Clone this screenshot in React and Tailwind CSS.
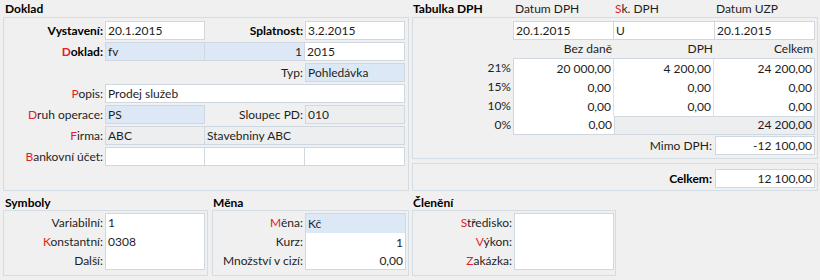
import React from "react";

const R = ({ children }) => <span className="text-[#e0202a]">{children}</span>;

function Cell({ w = "w-[100px]", bg = "bg-white", right = false, noLeft = false, children }) {
  return (
    <div
      className={`${w} h-[19px] shrink-0 border border-[#cfd8e0] ${noLeft ? "border-l-0" : ""} ${bg} ${
        right ? "text-right pr-[2px]" : "pl-[2px]"
      } leading-[17px] whitespace-nowrap overflow-hidden`}
    >
      {children}
    </div>
  );
}

function Label({ w = "w-[101px]", bold = false, children }) {
  return (
    <div className={`${w} shrink-0 h-[19px] leading-[19px] text-right pr-[2px] whitespace-nowrap ${bold ? "font-bold text-black" : ""}`}>
      {children}
    </div>
  );
}

const Row = ({ children }) => <div className="flex h-[19px]">{children}</div>;

export default function App() {
  return (
    <div
      className="w-[820px] h-[280px] bg-[#f0f0f0] text-[12px] text-[#1e1e1e] overflow-hidden"
      style={{ fontFamily: "Lato, 'Noto Sans', sans-serif" }}
    >
      {/* top */}
      <div className="flex pl-[3px]">
        {/* Doklad */}
        <div className="w-[406px] shrink-0">
          <div className="h-[17px] leading-[17px] pl-[2px] font-bold text-black">Doklad</div>
          <div className="h-[174px] border border-[#d5dde4] pt-[3px] flex flex-col gap-[2px]">
            <Row>
              <Label bold>Vystavení:</Label>
              <Cell>20.1.2015</Cell>
              <Label w="w-[100px]" bold>Splatnost:</Label>
              <Cell>3.2.2015</Cell>
            </Row>
            <Row>
              <Label bold>
                <R>D</R>oklad:
              </Label>
              <Cell bg="bg-[#dce8f6]">fv</Cell>
              <Cell bg="bg-[#dce8f6]" noLeft right>
                1
              </Cell>
              <Cell noLeft>2015</Cell>
            </Row>
            <Row>
              <Label />
              <div className="w-[100px] shrink-0" />
              <Label w="w-[100px]">Typ:</Label>
              <Cell bg="bg-[#dce8f6]">Pohledávka</Cell>
            </Row>
            <Row>
              <Label>
                <R>P</R>opis:
              </Label>
              <Cell w="w-[300px]">Prodej služeb</Cell>
            </Row>
            <Row>
              <Label>
                <R>D</R>ruh operace:
              </Label>
              <Cell bg="bg-[#dce8f6]">PS</Cell>
              <Label w="w-[100px]">Sloupec PD:</Label>
              <Cell bg="bg-[#eceef0]">010</Cell>
            </Row>
            <Row>
              <Label>
                <R>F</R>irma:
              </Label>
              <Cell bg="bg-[#eceef0]">ABC</Cell>
              <Cell w="w-[200px]" bg="bg-[#eceef0]" noLeft>
                Stavebniny ABC
              </Cell>
            </Row>
            <Row>
              <Label>
                <R>B</R>ankovní účet:
              </Label>
              <Cell />
              <Cell noLeft />
              <Cell noLeft />
            </Row>
          </div>
        </div>

        {/* Tabulka DPH */}
        <div className="w-[406px] shrink-0 ml-[3px]">
          <div className="h-[17px] leading-[17px] flex">
            <div className="w-[101px] pl-[1px] font-bold text-black">Tabulka DPH</div>
            <div className="w-[101px] pl-[2px]">Datum DPH</div>
            <div className="w-[101px] pl-[1px]">
              <R>S</R>k. DPH
            </div>
            <div className="w-[100px] pl-[1px]">Datum UZP</div>
          </div>
          <div className="h-[142px] border border-[#d5dde4] pt-[3px] flex flex-col">
            <Row>
              <div className="w-[100px] shrink-0" />
              <Cell w="w-[101px]">20.1.2015</Cell>
              <Cell w="w-[101px]" noLeft>
                U
              </Cell>
              <Cell noLeft>20.1.2015</Cell>
            </Row>
            <div className="flex h-[18px] leading-[18px]">
              <div className="w-[100px] shrink-0" />
              <div className="w-[101px] text-right pr-[2px]">Bez daně</div>
              <div className="w-[101px] text-right pr-[2px]">DPH</div>
              <div className="w-[100px] text-right pr-[2px]">Celkem</div>
            </div>
            <div className="flex">
              <div className="w-[100px] shrink-0 flex flex-col">
                {["21%", "15%", "10%", "0%"].map((p, i) => (
                  <div key={p} className={`${i === 3 ? "h-[18px] leading-[20px]" : "h-[19px] leading-[19px]"} text-right pr-[2px]`}>
                    {p}
                  </div>
                ))}
              </div>
              <div className="w-[302px] border border-[#cfd8e0] bg-white flex flex-col">
                {[
                  ["20 000,00", "4 200,00", "24 200,00"],
                  ["0,00", "0,00", "0,00"],
                  ["0,00", "0,00", "0,00"],
                ].map((r, i) => (
                  <div key={i} className="flex h-[19px] leading-[19px]">
                    <div className="w-[100px] border-r border-[#dde3e8] text-right pr-[2px]">{r[0]}</div>
                    <div className="w-[100px] border-r border-[#dde3e8] text-right pr-[2px]">{r[1]}</div>
                    <div className="flex-1 text-right pr-[2px]">{r[2]}</div>
                  </div>
                ))}
                <div className="flex h-[18px] leading-[18px]">
                  <div className="w-[100px] text-right pr-[2px]">0,00</div>
                  <div className="flex-1 bg-[#eceef0] border-l border-t border-[#cfd8e0] text-right pr-[2px] leading-[16px]">
                    24 200,00
                  </div>
                </div>
              </div>
            </div>
            <div className="flex mt-[1px] h-[19px]">
              <div className="w-[302px] shrink-0 text-right pr-[3px] leading-[19px]">Mimo DPH:</div>
              <Cell right>-12 100,00</Cell>
            </div>
          </div>
          <div className="mt-[4px] h-[28px] border border-[#d5dde4] pt-[5px]">
            <div className="flex h-[19px]">
              <div className="w-[302px] shrink-0 text-right pr-[3px] leading-[19px] font-bold text-black">Celkem:</div>
              <Cell right>12 100,00</Cell>
            </div>
          </div>
        </div>
      </div>

      {/* bottom */}
      <div className="flex pl-[3px]">
        {/* Symboly */}
        <div className="w-[205px] shrink-0">
          <div className="h-[19px] pt-[4px] leading-[15px] pl-[2px] font-bold text-black">Symboly</div>
          <div className="h-[66px] border border-[#d5dde4] pt-[2px] flex">
            <div className="w-[101px] shrink-0 flex flex-col">
              <Label>Variabilní:</Label>
              <Label>
                <R>K</R>onstantní:
              </Label>
              <Label>Další:</Label>
            </div>
            <div className="w-[100px] h-[57px] border border-[#cfd8e0] bg-white pl-[2px] flex flex-col">
              <div className="h-[18px] leading-[18px]">1</div>
              <div className="h-[19px] leading-[19px]">0308</div>
            </div>
          </div>
        </div>

        {/* Měna */}
        <div className="w-[197px] shrink-0 ml-[4px]">
          <div className="h-[19px] pt-[4px] leading-[15px] pl-[1px] font-bold text-black">Měna</div>
          <div className="h-[66px] border border-[#d5dde4] pt-[2px] flex">
            <div className="w-[92px] shrink-0 flex flex-col">
              <Label w="w-[92px]">
                <R>M</R>ěna:
              </Label>
              <Label w="w-[92px]">Kurz:</Label>
              <Label w="w-[92px]">Množství v cizí:</Label>
            </div>
            <div className="w-[101px] h-[57px] border border-[#cfd8e0] bg-white flex flex-col">
              <div className="h-[19px] leading-[19px] bg-[#dce8f6] pl-[2px]">Kč</div>
              <div className="h-[18px] leading-[19px] text-right pr-[2px]">1</div>
              <div className="h-[18px] leading-[19px] text-right pr-[2px]">0,00</div>
            </div>
          </div>
        </div>

        {/* Členění */}
        <div className="w-[204px] shrink-0 ml-[3px]">
          <div className="h-[19px] pt-[4px] leading-[15px] pl-[1px] font-bold text-black">Členění</div>
          <div className="h-[66px] border border-[#d5dde4] pt-[2px] flex">
            <div className="w-[101px] shrink-0 flex flex-col">
              <Label>
                <R>S</R>tředisko:
              </Label>
              <Label>
                <R>V</R>ýkon:
              </Label>
              <Label>
                <R>Z</R>akázka:
              </Label>
            </div>
            <div className="w-[100px] h-[57px] border border-[#cfd8e0] bg-white" />
          </div>
        </div>
      </div>
    </div>
  );
}
